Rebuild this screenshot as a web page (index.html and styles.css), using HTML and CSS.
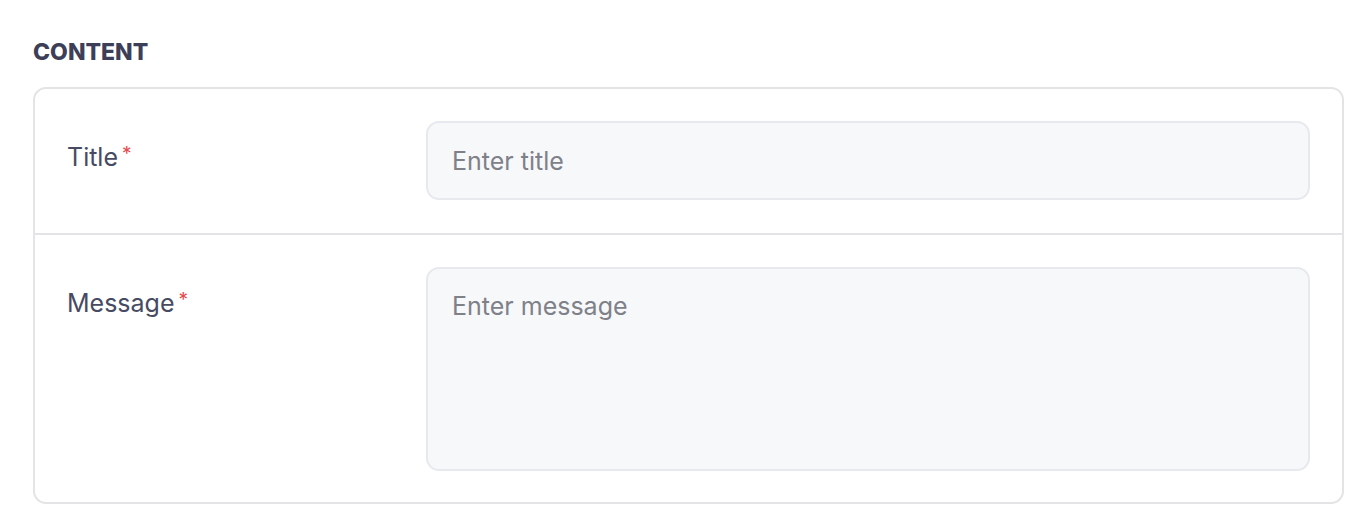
FILE: index.html
```html
<!DOCTYPE html>
<html>
<head>
<meta charset="utf-8">
<link rel="stylesheet" href="styles.css">
</head>
<body>
<section class="section">
  <h2 class="section-title">CONTENT</h2>
  <div class="card">
    <div class="row">
      <label class="label" for="title">Title<span class="req">*</span></label>
      <input id="title" class="input" type="text" placeholder="Enter title">
    </div>
    <div class="row row-second">
      <label class="label" for="message">Message<span class="req">*</span></label>
      <textarea id="message" class="input textarea" placeholder="Enter message"></textarea>
    </div>
  </div>
</section>
</body>
</html>
```
FILE: styles.css
```css
html, body {
  margin: 0;
  padding: 0;
  background: #ffffff;
}
body {
  font-family: Inter, Lato, "Liberation Sans", sans-serif;
  font-variant-ligatures: none;
}
.section {
  padding: 37px 28px 0 33px;
}
.section-title {
  margin: 0 0 20px 0;
  font-size: 23px;
  line-height: 30px;
  font-weight: 800;
  color: #3d3f58;
}
.card {
  border: 2px solid #e4e4e6;
  border-radius: 13px;
  background: #fff;
}
.row {
  display: grid;
  grid-template-columns: 359px 1fr;
  padding: 32px 32px 33px 32px;
  align-items: start;
}
.row + .row {
  border-top: 2px solid #e4e4e6;
}
.row-second {
  padding-bottom: 31px;
}
.label {
  padding-top: 20px;
  font-size: 25px;
  line-height: 32px;
  color: #474a63;
}
.req {
  color: #e5484d;
  font-size: 19px;
  vertical-align: top;
  position: relative;
  top: -3px;
  margin-left: 4px;
}
.input {
  box-sizing: border-box;
  width: 100%;
  height: 79px;
  margin: 0;
  padding: 0 24px;
  border: 2px solid #e8e9ee;
  border-radius: 13px;
  background: #f7f8fa;
  font-family: inherit;
  font-variant-ligatures: none;
  font-size: 25px;
  color: #474a63;
  outline: none;
}
.input::placeholder {
  color: #7f8189;
}
.textarea {
  display: block;
  height: 204px;
  padding: 21px 24px;
  line-height: 32px;
  resize: none;
}
```
